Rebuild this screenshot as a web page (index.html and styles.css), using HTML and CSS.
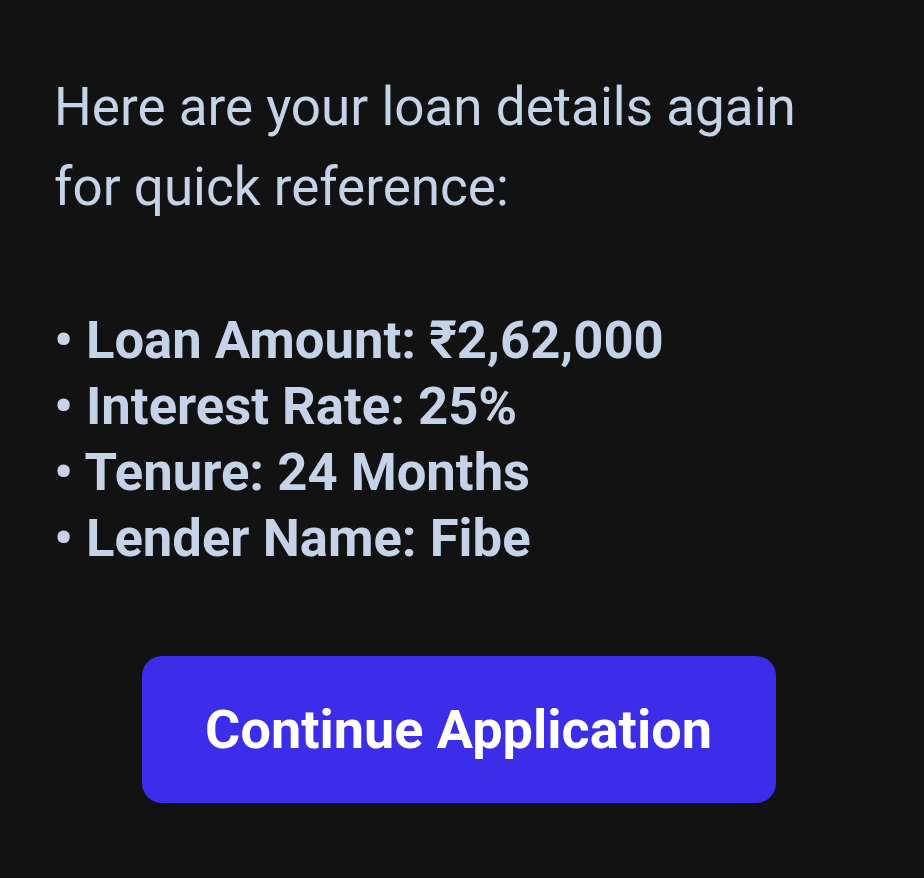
FILE: index.html
```html
<!DOCTYPE html>
<html>
<head>
<meta charset="utf-8">
<link rel="stylesheet" href="styles.css">
</head>
<body>
<main class="card">
  <p class="intro">Here are your loan details again for quick reference:</p>
  <ul class="details">
    <li>• Loan Amount: ₹2,62,000</li>
    <li>• Interest Rate: 25%</li>
    <li>• Tenure: 24 Months</li>
    <li>• Lender Name: Fibe</li>
  </ul>
  <div class="actions">
    <button class="cta">Continue Application</button>
  </div>
</main>
</body>
</html>
```

FILE: styles.css
```css
html, body {
  margin: 0;
  padding: 0;
  background: #121212;
}
body {
  width: 924px;
  height: 878px;
  overflow: hidden;
  font-family: Roboto, "Noto Sans", sans-serif;
}
.card {
  padding: 67px 55px 0 54px;
}
.intro {
  margin: 0;
  width: 780px;
  font-size: 53px;
  line-height: 80px;
  color: #c5d3e9;
  font-weight: 400;
}
.details {
  list-style: none;
  margin: 0;
  padding: 0;
  margin-top: 80px;
  color: #c5d3e9;
  font-size: 52.6px;
  font-weight: 700;
  line-height: 66px;
}
.details li {
  margin: 0;
}
.actions {
  display: flex;
  justify-content: center;
  margin-top: 85px;
  margin-right: 6px;
}
.cta {
  width: 634px;
  height: 147px;
  border: none;
  border-radius: 20px;
  background: #3b2de8;
  color: #ffffff;
  font-family: Roboto, "Noto Sans", sans-serif;
  font-size: 54px;
  font-weight: 700;
  padding: 0;
}
```
